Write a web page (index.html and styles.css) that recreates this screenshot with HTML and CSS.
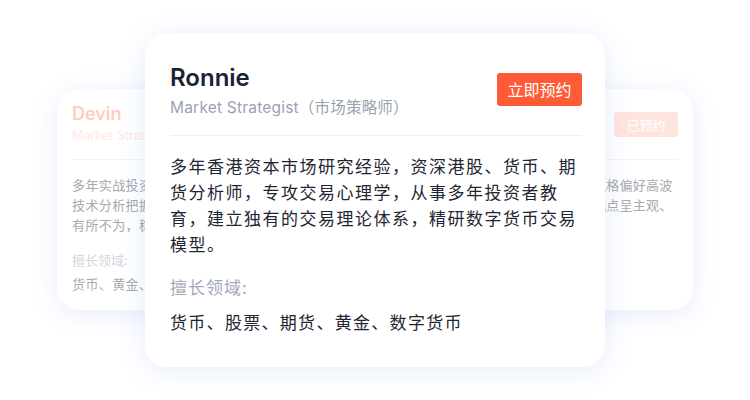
FILE: index.html
```html
<!DOCTYPE html>
<html lang="zh-CN">
<head>
<meta charset="utf-8">
<title>Analysts</title>
<link rel="stylesheet" href="styles.css">
</head>
<body>
<div class="stage">
  <div class="card side side-left">
    <div class="head">
      <div class="who">
        <div class="name">Devin</div>
        <div class="role">Market Strategist</div>
      </div>
    </div>
    <div class="rule"></div>
    <p class="bio">多年实战投资经验<br>技术分析把握入场<br>有所不为，稳健</p>
    <div class="label">擅长领域:</div>
    <div class="tags">货币、黄金、原油</div>
  </div>

  <div class="card side side-right">
    <div class="head">
      <div class="who">
        <div class="name">Kevin</div>
        <div class="role">Senior Trader</div>
      </div>
      <button class="btn btn-done">已预约</button>
    </div>
    <div class="rule"></div>
    <p class="bio">资深外汇贵金属交易员，擅长趋势跟踪策略，风格偏好高波<br>动品种，注重资金管理与风险控制，短线操作观点呈主观、<br>判断与量化结合。</p>
    <div class="label">擅长领域:</div>
    <div class="tags">外汇、黄金、原油</div>
  </div>

  <div class="card main">
    <div class="head">
      <div class="who">
        <div class="name">Ronnie</div>
        <div class="role">Market Strategist（市场策略师）</div>
      </div>
      <button class="btn btn-book">立即预约</button>
    </div>
    <div class="rule"></div>
    <p class="bio">多年香港资本市场研究经验，资深港股、货币、期货分析师，专攻交易心理学，从事多年投资者教育，建立独有的交易理论体系，精研数字货币交易模型。</p>
    <div class="label">擅长领域:</div>
    <div class="tags">货币、股票、期货、黄金、数字货币</div>
  </div>
</div>
</body>
</html>
```

FILE: styles.css
```css
* { box-sizing: border-box; }

html, body {
  margin: 0;
  padding: 0;
  background: #ffffff;
}

body {
  font-family: "Inter", "Noto Sans CJK SC", sans-serif;
}

.stage {
  width: 750px;
  height: 400px;
  display: grid;
  overflow: hidden;
}

.card {
  grid-area: 1 / 1;
  align-self: start;
  background: #ffffff;
  border-radius: 22px;
  box-shadow: 0 4px 26px rgba(72, 118, 230, 0.13);
  overflow: hidden;
}

.head {
  display: flex;
  justify-content: space-between;
  align-items: flex-start;
}

.bio { margin: 0; }

.btn {
  border: 0;
  font-family: "Noto Sans CJK SC", sans-serif;
  color: #ffffff;
  border-radius: 3px;
  padding: 0;
  cursor: pointer;
}

/* ---------- side cards ---------- */
.side {
  width: 380px;
  padding: 14px 15px 16px 15px;
}

.side-left {
  justify-self: start;
  margin: 89px 0 0 57px;
}

.side-right {
  justify-self: end;
  margin: 89px 57px 0 0;
}

.side .name {
  font-size: 18px;
  font-weight: 600;
  line-height: 22px;
  color: #ffcdc0;
}

.side .role {
  margin-top: 2px;
  font-size: 12.5px;
  line-height: 18px;
  color: #ffe9e3;
  white-space: nowrap;
}

.side .rule {
  margin-top: 14px;
  height: 1px;
  background: #f4f5f8;
}

.side .bio {
  margin-top: 15px;
  font-size: 13px;
  letter-spacing: 0.4px;
  line-height: 20px;
  color: #a7a9ae;
  white-space: nowrap;
}

.side-right .bio {
  letter-spacing: 0.25px;
}

.side .label {
  margin-top: 15px;
  font-size: 13px;
  line-height: 20px;
  color: #d3d6dc;
}

.side .tags {
  margin-top: 4px;
  font-size: 13px;
  letter-spacing: 0.4px;
  line-height: 20px;
  color: #a9abb0;
}

.btn-done {
  margin-top: 9px;
  width: 64px;
  height: 25px;
  font-size: 13px;
  line-height: 25px;
  background: #ffe4de;
}

/* ---------- main card ---------- */
.main {
  justify-self: center;
  margin-top: 33px;
  width: 460px;
  padding: 30px 23px 31px 25px;
  box-shadow: 0 4px 28px rgba(72, 118, 230, 0.14);
}

.main .name {
  font-size: 24px;
  font-weight: 600;
  line-height: 30px;
  color: #1b2233;
}

.main .role {
  margin-top: 4px;
  font-size: 15.5px;
  letter-spacing: 0.2px;
  line-height: 22px;
  color: #9aa2b3;
  white-space: nowrap;
}

.btn-book {
  margin-top: 10px;
  height: 33px;
  padding: 0 10.5px;
  font-size: 16px;
  line-height: 33px;
  background: #ff5b37;
}

.main .rule {
  margin-top: 16px;
  height: 1px;
  background: #eef0f5;
}

.main .bio {
  margin-top: 18px;
  font-size: 17px;
  letter-spacing: 1.5px;
  line-height: 26px;
  color: #1f2633;
}

.main .label {
  margin-top: 17px;
  font-size: 17px;
  letter-spacing: 1px;
  line-height: 26px;
  color: #a3aab9;
}

.main .tags {
  margin-top: 9px;
  font-size: 17px;
  letter-spacing: 1.3px;
  line-height: 26px;
  color: #1f2633;
}
```
